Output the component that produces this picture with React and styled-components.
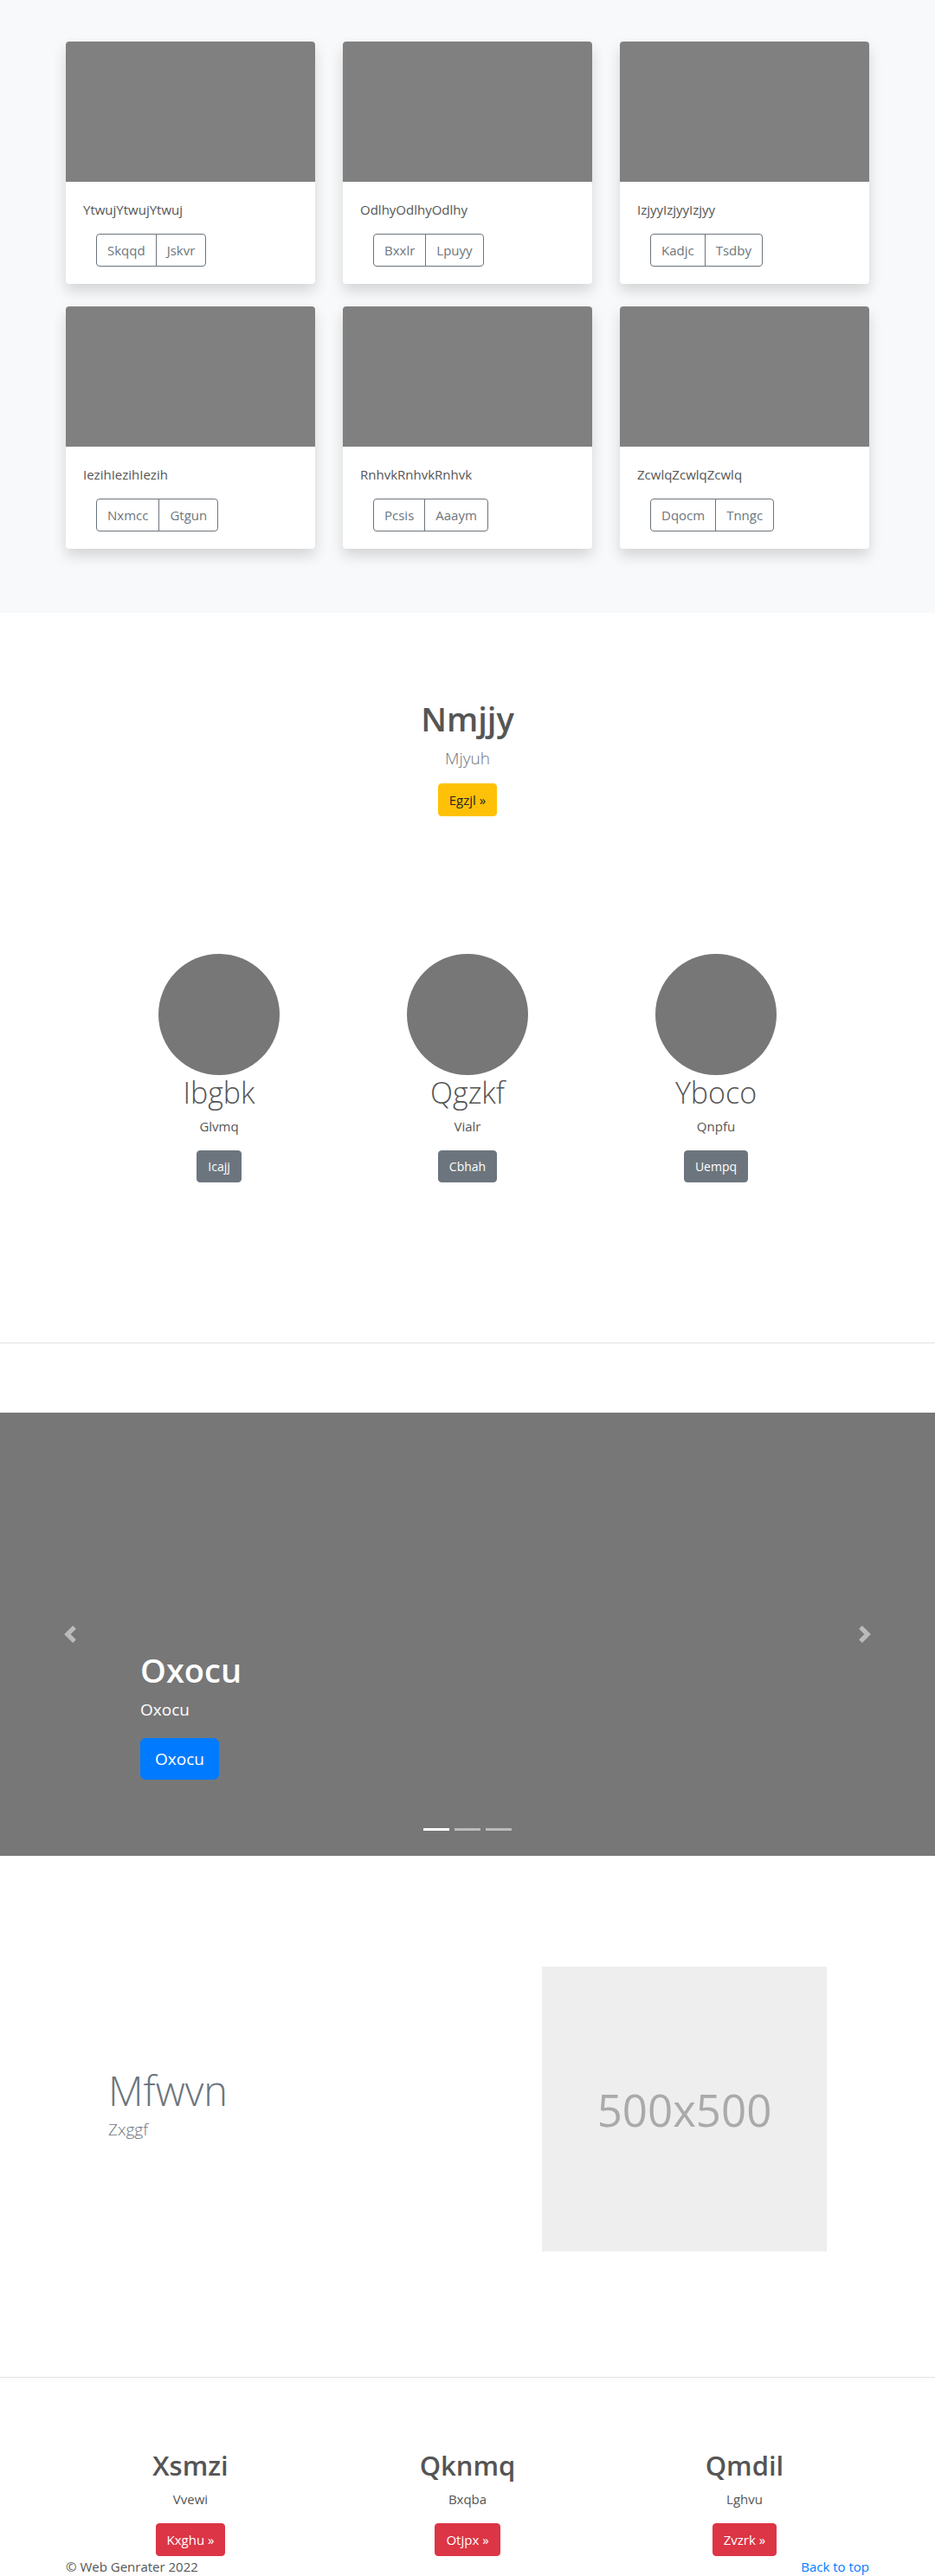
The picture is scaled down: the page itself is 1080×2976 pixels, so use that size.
import React from "react";
import styled, { createGlobalStyle } from "styled-components";

const GlobalStyle = createGlobalStyle`
  body {
    margin: 0;
    background: #fff;
    font-family: "Open Sans", "Noto Sans", sans-serif;
    color: #212529;
  }
  * { box-sizing: border-box; }
`;

const albumItems = [
  { text: "YtwujYtwujYtwuj", btns: ["Skqqd", "Jskvr"] },
  { text: "OdlhyOdlhyOdlhy", btns: ["Bxxlr", "Lpuyy"] },
  { text: "IzjyyIzjyyIzjyy", btns: ["Kadjc", "Tsdby"] },
  { text: "IezihIezihIezih", btns: ["Nxmcc", "Gtgun"] },
  { text: "RnhvkRnhvkRnhvk", btns: ["Pcsis", "Aaaym"] },
  { text: "ZcwlqZcwlqZcwlq", btns: ["Dqocm", "Tnngc"] },
];

const team = [
  { name: "Ibgbk", sub: "Glvmq", btn: "Icajj" },
  { name: "Qgzkf", sub: "Vialr", btn: "Cbhah" },
  { name: "Yboco", sub: "Qnpfu", btn: "Uempq" },
];

const features = [
  { name: "Xsmzi", sub: "Vvewi", btn: "Kxghu »" },
  { name: "Qknmq", sub: "Bxqba", btn: "Otjpx »" },
  { name: "Qmdil", sub: "Lghvu", btn: "Zvzrk »" },
];

/* album */
const Album = styled.section`
  background: #f8f9fa;
  padding: 48px 0 74px;
`;

const CardGrid = styled.div`
  width: 928px;
  margin: 0 auto;
  display: grid;
  grid-template-columns: repeat(3, 288px);
  column-gap: 32px;
  row-gap: 26px;
`;

const Card = styled.div`
  background: #fff;
  border-radius: 4px;
  overflow: hidden;
  box-shadow: 0 8px 16px rgba(0, 0, 0, 0.15);
`;

const Thumb = styled.div`
  height: 162px;
  background: #808080;
`;

const CardBody = styled.div`
  padding: 20px;
`;

const CardText = styled.p`
  margin: 0 0 16px;
  font-size: 15px;
  line-height: 24px;
  color: #555;
`;

const BtnGroup = styled.div`
  display: inline-flex;
  margin-left: 15px;
`;

const OutlineBtn = styled.button`
  font-family: inherit;
  font-size: 15px;
  line-height: 24px;
  padding: 6px 12px;
  background: transparent;
  color: #6c757d;
  border: 1px solid #6c757d;
  border-radius: 0;
  &:first-child { border-radius: 4px 0 0 4px; }
  &:last-child { border-radius: 0 4px 4px 0; margin-left: -1px; }
`;

/* generic button */
const Btn = styled.button`
  font-family: inherit;
  font-size: ${(p) => p.size || 15}px;
  line-height: ${(p) => p.lh || 24}px;
  padding: ${(p) => (p.large ? "8px 16px" : "6px 12px")};
  border: 1px solid ${(p) => p.bg};
  background: ${(p) => p.bg};
  color: ${(p) => p.fg || "#fff"};
  border-radius: ${(p) => (p.large ? 6 : 4)}px;
`;

/* hero */
const Hero = styled.section`
  padding-top: 98px;
  text-align: center;
`;

const HeroTitle = styled.h1`
  margin: 0 0 7px;
  font-size: 38px;
  line-height: 48px;
  font-weight: 600;
  color: #555;
`;

const Lead = styled.p`
  margin: 0 0 14px;
  font-size: 19px;
  line-height: 30px;
  font-weight: 300;
  color: ${(p) => p.color || "#6c757d"};
`;

/* team */
const TeamGrid = styled.div`
  width: 861px;
  margin: 159px auto 0;
  display: grid;
  grid-template-columns: repeat(3, 1fr);
`;

const Member = styled.div`
  display: flex;
  flex-direction: column;
  align-items: center;
`;

const Avatar = styled.div`
  width: 140px;
  height: 140px;
  border-radius: 50%;
  background: #777;
`;

const MemberName = styled.h2`
  margin: -1px 0 5px;
  font-size: 34px;
  line-height: 43px;
  font-weight: 300;
  color: #555;
`;

const Small = styled.p`
  margin: 0 0 16px;
  font-size: 15px;
  line-height: 24px;
  color: #555;
`;

const Rule = styled.hr`
  margin: ${(p) => p.top}px 0 0;
  border: 0;
  border-top: 1px solid #e2e2e2;
`;

/* carousel */
const Carousel = styled.div`
  position: relative;
  margin-top: 80px;
  height: 512px;
  background: #777;
  display: flex;
  flex-direction: column;
  justify-content: flex-end;
  padding: 0 162px 88px;
  color: #fff;
`;

const SlideTitle = styled.h2`
  margin: 0 0 7px;
  font-size: 38px;
  line-height: 48px;
  font-weight: 600;
`;

const SlideText = styled.p`
  margin: 0 0 18px;
  font-size: 19px;
  line-height: 30px;
`;

const Control = styled.div`
  position: absolute;
  top: 0;
  bottom: 0;
  ${(p) => (p.side === "left" ? "left: 0;" : "right: 0;")}
  width: 15%;
  display: flex;
  align-items: center;
  justify-content: center;
  opacity: 0.5;
`;

const Indicators = styled.div`
  position: absolute;
  left: 0;
  right: 0;
  bottom: 29px;
  display: flex;
  justify-content: center;
  gap: 6px;
`;

const Dot = styled.span`
  width: 30px;
  height: 3px;
  background: #fff;
  opacity: ${(p) => (p.active ? 1 : 0.5)};
`;

/* featurette */
const Featurette = styled.div`
  width: 830px;
  margin: 128px auto 0;
  display: flex;
  align-items: center;
`;

const FeatText = styled.div`
  flex: 1;
`;

const FeatTitle = styled.h2`
  margin: 0;
  font-size: 47px;
  line-height: 60px;
  font-weight: 300;
  color: #6c757d;
`;

const Placeholder = styled.div`
  width: 329px;
  height: 329px;
  background: #eee;
  color: #aaa;
  display: flex;
  align-items: center;
  justify-content: center;
  font-size: 51px;
`;

/* bottom features */
const FeatureGrid = styled.div`
  width: 960px;
  margin: 82px auto 0;
  display: grid;
  grid-template-columns: repeat(3, 1fr);
  text-align: center;
`;

const FeatureName = styled.h2`
  margin: 0 0 8px;
  font-size: 31px;
  line-height: 38px;
  font-weight: 600;
  color: #555;
`;

const Footer = styled.footer`
  width: 928px;
  margin: 0 auto;
  padding-bottom: 40px;
  display: flex;
  justify-content: space-between;
  font-size: 15px;
  line-height: 24px;
  color: #555;
`;

const TopLink = styled.a`
  color: #007bff;
  text-decoration: none;
`;

const Chevron = ({ dir }) => (
  <svg width="20" height="20" viewBox="0 0 8 8" fill="#fff">
    {dir === "left" ? (
      <path d="M5.25 0l-4 4 4 4 1.5-1.5L4.25 4l2.5-2.5L5.25 0z" />
    ) : (
      <path d="M2.75 0l-1.5 1.5L3.75 4l-2.5 2.5L2.75 8l4-4-4-4z" />
    )}
  </svg>
);

export default function App() {
  return (
    <>
      <GlobalStyle />
      <Album>
        <CardGrid>
          {albumItems.map((it) => (
            <Card key={it.text}>
              <Thumb />
              <CardBody>
                <CardText>{it.text}</CardText>
                <BtnGroup>
                  {it.btns.map((b) => (
                    <OutlineBtn key={b}>{b}</OutlineBtn>
                  ))}
                </BtnGroup>
              </CardBody>
            </Card>
          ))}
        </CardGrid>
      </Album>

      <Hero>
        <HeroTitle>Nmjjy</HeroTitle>
        <Lead>Mjyuh</Lead>
        <Btn bg="#ffc107" fg="#212529">Egzjl »</Btn>
      </Hero>

      <TeamGrid>
        {team.map((m) => (
          <Member key={m.name}>
            <Avatar />
            <MemberName>{m.name}</MemberName>
            <Small>{m.sub}</Small>
            <Btn bg="#6c757d" size={14} lh={23}>{m.btn}</Btn>
          </Member>
        ))}
      </TeamGrid>

      <Rule top={185} />

      <Carousel>
        <Control side="left"><Chevron dir="left" /></Control>
        <Control side="right"><Chevron dir="right" /></Control>
        <div>
          <SlideTitle>Oxocu</SlideTitle>
          <SlideText>Oxocu</SlideText>
          <Btn bg="#007bff" size={19} lh={30} large>Oxocu</Btn>
        </div>
        <Indicators>
          <Dot active />
          <Dot />
          <Dot />
        </Indicators>
      </Carousel>

      <Featurette>
        <FeatText>
          <FeatTitle>Mfwvn</FeatTitle>
          <Lead>Zxggf</Lead>
        </FeatText>
        <Placeholder>500x500</Placeholder>
      </Featurette>

      <Rule top={145} />

      <FeatureGrid>
        {features.map((f) => (
          <div key={f.name}>
            <FeatureName>{f.name}</FeatureName>
            <Small>{f.sub}</Small>
            <Btn bg="#dc3545">{f.btn}</Btn>
          </div>
        ))}
      </FeatureGrid>

      <Footer>
        <span>© Web Genrater 2022</span>
        <TopLink href="#">Back to top</TopLink>
      </Footer>
    </>
  );
}
